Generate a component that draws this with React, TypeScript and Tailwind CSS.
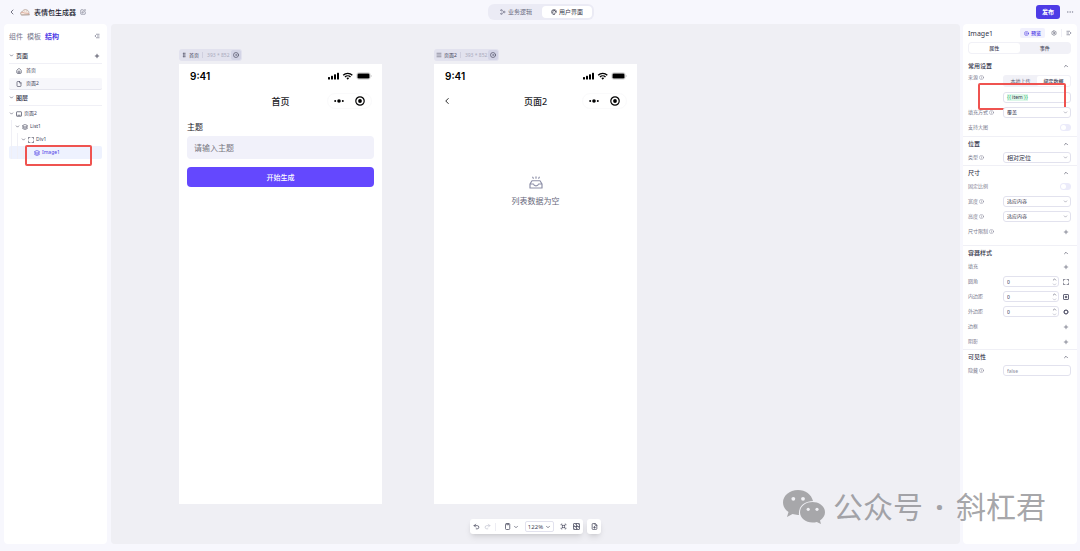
import { useState } from "react";
import type { ReactNode } from "react";
import {
  ChevronDown,
  ChevronLeft,
  ChevronUp,
  CircleDot,
  CirclePlay,
  Ellipsis,
  File,
  FilePlus,
  GripVertical,
  Home,
  Info,
  Layers,
  Menu,
  Palette,
  Plus,
  Redo2,
  Settings,
  Share2,
  SquarePen,
  Undo2,
} from "lucide-react";

function MascotLogo() {
  return (
    <svg viewBox="0 0 20 16" className="h-2 w-2.5" fill="none" stroke="#a08d84" strokeWidth="1.1">
      <path d="M1 12c0-3 1-5 4-5 1-4 6-5 9-3 3 1 4 4 4 7l1 3H3z" fill="#f6ebe3" />
      <path d="M2 10c3-2 5-1 7 0l9 1" stroke="#d08775" />
      <path d="M9 6h1M13 6h1M2 14l16-1" />
    </svg>
  );
}

function CollapseIcon({ flip = false }: { flip?: boolean }) {
  return (
    <svg viewBox="0 0 12 12" className={flip ? "size-1.5 rotate-180" : "size-1.5"} fill="none" stroke="#77788c" strokeWidth="1.4">
      <path d="M4 2.500h7M6 6h5M4 9.500h7" />
      <path d="M4 4v4L1 6z" fill="#77788c" stroke="none" />
    </svg>
  );
}

function CornersIcon({ className }: { className: string }) {
  return (
    <svg viewBox="0 0 12 12" className={className} fill="none" stroke="currentColor" strokeWidth="1.500">
      <path d="M1 3.500V1h2.500M8.500 1H11v2.500M11 8.500V11H8.500M3.500 11H1V8.500" />
      <path d="M5.300 1h1.400M5.300 11h1.400M1 5.300v1.400M11 5.300v1.400" strokeWidth="1.200" />
    </svg>
  );
}

function ScreenIcon() {
  return (
    <svg viewBox="0 0 12 12" className="size-1.5" fill="none" stroke="currentColor" strokeWidth="1.400">
      <rect x="1" y="1.500" width="10" height="9" rx="1" />
      <path d="M3 8.500h6" />
    </svg>
  );
}

function FitIcon() {
  return (
    <svg viewBox="0 0 14 14" className="size-[7px]" fill="none" stroke="currentColor" strokeWidth="1.300">
      <path d="M1 3.500h2.500V1M10.500 1v2.500H13M13 10.500h-2.500V13M3.500 13v-2.500H1" />
      <rect x="4.500" y="4.500" width="5" height="5" />
    </svg>
  );
}

function OverviewIcon() {
  return (
    <svg viewBox="0 0 14 14" className="size-[7px]" fill="none" stroke="currentColor" strokeWidth="1.500">
      <rect x="1" y="1" width="12" height="12" rx="1" />
      <path d="M1 7h12M7 1v12M3 5l2-2M9 5l2-2M3 11l2-2M9 11l2-2" />
    </svg>
  );
}

function DeviceIcon() {
  return (
    <svg viewBox="0 0 14 14" className="size-[7px]" fill="none" stroke="currentColor" strokeWidth="1.500">
      <rect x="3" y="1" width="8.500" height="12" rx="2" />
      <path d="M5.500 1v2.500h3.500V1" />
    </svg>
  );
}

function PaddingIcon() {
  return (
    <svg viewBox="0 0 12 12" className="size-1.5" fill="none" stroke="#55566b" strokeWidth="1.800">
      <rect x="1" y="1" width="10" height="10" rx="1" />
      <rect x="4.500" y="4.500" width="3" height="3" strokeWidth="1.500" />
    </svg>
  );
}

function MarginIcon() {
  return (
    <svg viewBox="0 0 12 12" className="size-1.5" fill="none" stroke="#55566b" strokeWidth="1.800">
      <path d="M6 1 11 6 6 11 1 6z" />
      <rect x="3" y="3" width="6" height="6" strokeWidth="1.500" />
    </svg>
  );
}

function TopBar() {
  return (
    <header className="grid h-6 grid-cols-[1fr_auto_1fr] items-center pr-1.5 pl-2">
      <div className="flex items-center">
        <button aria-label="返回" className="mr-1">
          <ChevronLeft className="size-2 text-[#333447]" />
        </button>
        <MascotLogo />
        <h1 className="ml-1 text-[7px] font-medium text-[#20212e]">表情包生成器</h1>
        <button aria-label="重命名" className="ml-1">
          <SquarePen className="size-1.5 text-[#55566b]" />
        </button>
      </div>
      <nav className="flex h-4 items-center gap-2.5 rounded-md bg-[#ebebf5] pr-0.5 pl-3 text-[6px]">
        <button className="flex items-center gap-0.5 text-[#6a6b80]">
          <Share2 className="size-1.5 rotate-180" />
          业务逻辑
        </button>
        <button className="flex h-3 items-center gap-0.5 rounded-[4px] bg-white px-[9px] text-[#3a3b4d]">
          <Palette className="size-1.5" strokeWidth={2.5} />
          用户界面
        </button>
      </nav>
      <div className="flex items-center justify-end gap-1.5">
        <button className="h-3.5 rounded-[3px] bg-[#4d3be6] px-1.5 text-[6px] font-bold text-white">发布</button>
        <button aria-label="更多">
          <Ellipsis className="size-2 text-[#77788c]" strokeWidth={1.5} />
        </button>
      </div>
    </header>
  );
}

function Chevron() {
  return <ChevronDown className="size-[5px] shrink-0 text-[#55566b]" strokeWidth={3} />;
}

function TreeRow({ depth, icon, label, open = true, active = false }: {
  depth: number;
  icon: ReactNode;
  label: string;
  open?: boolean;
  active?: boolean;
}) {
  return (
    <li className={`relative flex h-[13px] items-center rounded-[2px] text-[5px] ${active ? "bg-[#eef2fe] text-[#4d3be6]" : "text-[#44455a]"}`}>
      {Array.from({ length: depth }, (_, i) => (
        <span key={i} className="h-full w-1.5 shrink-0">
          <span className="ml-0.5 block h-full border-l border-[#f0f0f6]" />
        </span>
      ))}
      <span className="flex w-[7px] shrink-0">{open && <Chevron />}</span>
      <button className="flex items-center gap-0.5 whitespace-nowrap">
        {icon}
        {label}
      </button>
      {active && <span className="absolute -top-px left-4 h-[21px] w-[67px] rounded-[2px] border-2 border-[#ef5350]" />}
    </li>
  );
}

function LeftPanel() {
  return (
    <aside className="w-[103px] shrink-0 rounded-sm bg-white px-[5px]">
      <div className="flex h-6 items-center gap-1 text-[7px] text-[#77788c]">
        <button>组件</button>
        <button>模板</button>
        <button className="font-bold text-[#4d3be6]">结构</button>
        <span className="ml-auto pr-0.5">
          <CollapseIcon />
        </span>
      </div>
      <div className="flex h-4 items-center gap-0.5 border-b border-[#f0f0f6] text-[6px] font-medium text-[#33344a]">
        <Chevron />
        页面
        <button aria-label="添加页面" className="ml-auto pr-0.5">
          <Plus className="size-1.5 text-[#33344a]" strokeWidth={3} />
        </button>
      </div>
      <ul className="text-[5px] text-[#44455a]">
        <li className="mb-px flex h-[13px] items-center gap-1 pl-[7px]">
          <Home className="size-1.5" strokeWidth={2.5} />
          首页
        </li>
        <li className="flex h-3 items-center gap-1 rounded-[2px] border-b border-[#e6e6ee] bg-[#f7f7fb] pl-[7px]">
          <File className="size-1.5" strokeWidth={2.5} />
          页面2
        </li>
      </ul>
      <div className="flex h-4 items-center gap-0.5 border-b border-[#f0f0f6] text-[6px] font-medium text-[#33344a]">
        <Chevron />
        图层
      </div>
      <ul className="pt-px">
        <TreeRow depth={0} icon={<ScreenIcon />} label="页面2" />
        <TreeRow depth={1} icon={<Layers className="size-1.5" strokeWidth={2.5} />} label="List1" />
        <TreeRow depth={2} icon={<CornersIcon className="size-1.5" />} label="Div1" />
        <TreeRow depth={3} icon={<Layers className="size-1.5" strokeWidth={2.5} />} label="Image1" open={false} active />
      </ul>
    </aside>
  );
}

function StatusBar() {
  return (
    <div className="flex h-6 items-center justify-between pr-2.5 pl-[11px]">
      <span className="font-['Inter',sans-serif] text-[10px] font-semibold text-black">9:41</span>
      <svg viewBox="0 0 44 8" className="h-2 w-11" fill="#000">
        <rect x="0" y="5" width="2" height="2.500" rx=".5" />
        <rect x="3" y="3.800" width="2" height="3.700" rx=".5" />
        <rect x="6" y="2.300" width="2" height="5.200" rx=".5" />
        <rect x="9" y=".7" width="2" height="6.800" rx=".5" />
        <path d="M15.200 3.200c2.500-2.500 6.600-2.500 9.100 0M17 5c1.500-1.500 4-1.500 5.500 0" fill="none" stroke="#000" strokeWidth="1.400" />
        <path d="m19.750 7.700-1.400-1.600c.8-.7 2-.7 2.800 0z" />
        <rect x="28.800" y=".7" width="13.400" height="6.600" rx="2" fill="none" stroke="#b5b5b5" strokeWidth=".5" />
        <rect x="29.500" y="1.400" width="12" height="5.200" rx="1.300" />
        <path d="M42.900 3v2c.8-.2.8-1.800 0-2z" fill="#aaa" />
      </svg>
    </div>
  );
}

function NavBar({ title, back = false }: { title: string; back?: boolean }) {
  return (
    <div className="grid h-[26px] grid-cols-[1fr_auto_1fr] items-center px-2">
      <span>{back && <ChevronLeft className="size-2.5 text-black" strokeWidth={2} />}</span>
      <h2 className="text-[9px] font-medium text-[#1b1b1f]">{title}</h2>
      <span className="mr-0.5 flex h-4 w-[45px] items-center justify-around justify-self-end rounded-full border border-[#fafafb]">
        <svg viewBox="0 0 10 4" className="h-1 w-2.5">
          <circle cx="1.200" cy="2" r="1" />
          <circle cx="5" cy="2" r="1.800" />
          <circle cx="8.800" cy="2" r="1" />
        </svg>
        <svg viewBox="0 0 10 10" className="size-2.5">
          <circle cx="5" cy="5" r="4.200" fill="none" stroke="#000" strokeWidth="1.200" />
          <circle cx="5" cy="5" r="1.900" />
        </svg>
      </span>
    </div>
  );
}

function Artboard({ name, icon, children }: { name: string; icon: ReactNode; children: ReactNode }) {
  return (
    <section className="flex w-[203px] flex-col gap-[3px]">
      <div className="flex h-3 items-center gap-[3px] self-start rounded-[3px] bg-[#e2e2ee] pr-px pl-0.5 text-[5px] text-[#44455a]">
        <span className="flex items-center gap-0.5">
          {icon}
          {name}
        </span>
        <span className="flex items-center gap-1 text-[#aaabbd]">
          <span className="h-1.5 border-l border-[#cfcfdf]" />
          393 * 852
        </span>
        <button aria-label="预览页面" className="-ml-0.5 flex size-2.5 items-center justify-center rounded-[2px] bg-[#d3d4e6]">
          <CircleDot className="size-1.5 text-[#44455a]" strokeWidth={2.5} />
        </button>
      </div>
      <div className="h-110 bg-white">{children}</div>
    </section>
  );
}

function EmptyBox() {
  return (
    <svg viewBox="0 0 28 26" className="h-[13px] w-3.5" fill="none" stroke="#8e90a8" strokeWidth="2.400" strokeLinejoin="round" strokeLinecap="round">
      <path d="M2 16 6 9.500h16L26 16v8H2zM2 16h7c1 5 9 5 10 0h7" />
      <path d="M14 1.500v3M7.500 2.500l1 2M20.500 2.500l-1 2" />
    </svg>
  );
}

function Toolbar() {
  return (
    <div className="mt-[15px] flex gap-1 self-center text-[#44455a]">
      <div className="flex h-[15px] items-center rounded-[3px] bg-white px-[3px] shadow-md">
        <button aria-label="撤销"><Undo2 className="size-[7px]" strokeWidth={2.5} /></button>
        <button aria-label="重做" className="ml-1"><Redo2 className="size-[7px] text-[#c4c5d2]" strokeWidth={2.5} /></button>
        <span className="ml-1 h-2 border-l border-[#ededf3]" />
        <button aria-label="设备" className="ml-2 flex items-center gap-0.5">
          <DeviceIcon />
          <ChevronDown className="size-1.5" strokeWidth={2.5} />
        </button>
        <button className="mx-1.5 flex h-[11px] items-center gap-0.5 rounded-[2px] border border-[#e2e2ee] px-0.5 text-[6px]">
          122%
          <ChevronDown className="size-1.5" strokeWidth={2.5} />
        </button>
        <button aria-label="适应画布"><FitIcon /></button>
        <button aria-label="组件概览" className="ml-1.5"><OverviewIcon /></button>
      </div>
      <button aria-label="新建页面" className="flex h-[15px] w-3.5 items-center justify-center rounded-[3px] bg-white shadow-md">
        <FilePlus className="size-[7px]" strokeWidth={2.5} />
      </button>
    </div>
  );
}

function Canvas() {
  return (
    <main className="flex min-w-0 flex-1 flex-col rounded-sm bg-[#efeff4] pt-[25px] pb-2.5">
      <div className="flex gap-[52px] pl-17">
        <Artboard name="首页" icon={<GripVertical className="size-1.5" strokeWidth={2} />}>
          <StatusBar />
          <NavBar title="首页" />
          <form className="flex flex-col px-2 pt-[7px]" onSubmit={(e) => e.preventDefault()}>
            <label htmlFor="topic" className="flex h-3 items-center text-[8px] text-[#1b1b1f]">主题</label>
            <input
              id="topic"
              placeholder="请输入主题"
              className="mt-[3px] h-[23px] w-full rounded-[4px] bg-[#f1f1fa] px-[7px] text-[8px] placeholder:text-[#77777f]"
            />
            <button className="mt-2 h-5 rounded-[4px] bg-[#6448fe] text-[7px] font-medium text-white">开始生成</button>
          </form>
        </Artboard>
        <Artboard name="页面2" icon={<Menu className="size-1.5" />}>
          <StatusBar />
          <NavBar title="页面2" back />
          <div className="flex flex-col items-center gap-2 pt-[62px]">
            <EmptyBox />
            <p className="text-[8px] text-[#66677a]">列表数据为空</p>
          </div>
        </Artboard>
      </div>
      <Toolbar />
    </main>
  );
}

function Section({ title, first = false, children }: { title: string; first?: boolean; children: ReactNode }) {
  return (
    <section className={`pr-1.5 pl-[5px] ${first ? "pb-px" : "border-t border-[#f0f0f6] pt-px"}`}>
      <h3 className="flex h-3 items-center justify-between text-[6px] font-medium text-[#33344a]">
        {title}
        <ChevronUp className="mr-0.5 size-1.5 text-[#44455a]" strokeWidth={2.5} />
      </h3>
      {children}
    </section>
  );
}

function FieldLabel({ text, info, htmlFor }: { text: string; info?: boolean; htmlFor?: string }) {
  return (
    <label htmlFor={htmlFor} className="flex w-[35px] shrink-0 items-center gap-px whitespace-nowrap text-[5px] text-[#77788c]">
      {text}
      {info && <Info className="size-[5px]" />}
    </label>
  );
}

const boxClass = "h-[11px] w-full rounded-[3px] border border-[#e2e2ee] bg-white";

function SelectRow({ id, label, value, info = true, large = false }: {
  id: string;
  label: string;
  value: string;
  info?: boolean;
  large?: boolean;
}) {
  return (
    <div className="flex h-[15px] items-center">
      <FieldLabel htmlFor={id} text={label} info={info} />
      <span className="relative flex flex-1 items-center">
        <select id={id} className={`${boxClass} appearance-none pl-[3px] text-[#33344a] ${large ? "text-[6px]" : "text-[5px]"}`}>
          <option>{value}</option>
        </select>
        <ChevronDown className="pointer-events-none absolute right-[3px] size-[5px] text-[#77788c]" strokeWidth={2.5} />
      </span>
    </div>
  );
}

function SwitchRow({ id, label }: { id: string; label: string }) {
  return (
    <div className="flex h-[15px] items-center justify-between">
      <FieldLabel htmlFor={id} text={label} />
      <input
        id={id}
        type="checkbox"
        role="switch"
        className="h-[7px] w-[11px] appearance-none rounded-full bg-[#ebebfa] before:m-px before:block before:size-[5px] before:rounded-full before:bg-white checked:bg-[#6448fe] checked:before:ml-[5px]"
      />
    </div>
  );
}

function AddRow({ label, info }: { label: string; info?: boolean }) {
  return (
    <div className="flex h-[15px] items-center justify-between">
      <FieldLabel text={label} info={info} />
      <button aria-label={`添加${label}`} className="mr-0.5">
        <Plus className="size-1.5 text-[#55566b]" strokeWidth={2.5} />
      </button>
    </div>
  );
}

function NumberRow({ id, label, icon }: { id: string; label: string; icon: ReactNode }) {
  const [value, setValue] = useState("0");
  return (
    <div className="flex h-[15px] items-center">
      <FieldLabel htmlFor={id} text={label} />
      <span className="relative flex flex-1 items-center">
        <input
          id={id}
          inputMode="numeric"
          value={value}
          onChange={(e) => setValue(e.target.value)}
          className={`${boxClass} pl-[3px] text-[5px] text-[#33344a]`}
        />
        <span className="absolute right-0.5 flex flex-col text-[#55566b]">
          <ChevronUp className="size-[5px]" strokeWidth={3} />
          <ChevronDown className="size-[5px] text-[#aaabbd]" strokeWidth={3} />
        </span>
      </span>
      <button aria-label={`${label}分别设置`} className="mr-0.5 ml-1">
        {icon}
      </button>
    </div>
  );
}

function RightPanel() {
  return (
    <aside className="w-[114px] shrink-0 rounded-sm bg-white">
      <div className="flex h-[18px] items-center px-[5px]">
        <h2 className="text-[7px] text-[#33344a]">Image1</h2>
        <button className="ml-auto flex h-2.5 items-center gap-0.5 rounded-[2px] bg-[#f1f1fd] px-1 text-[5px] font-medium text-[#4d3be6]">
          <CirclePlay className="size-[5px]" strokeWidth={2.5} />
          预览
        </button>
        <button aria-label="设置" className="ml-1.5"><Settings className="size-1.5 text-[#55566b]" strokeWidth={2} /></button>
        <span className="mx-1 h-2 border-l border-[#f0f0f6]" />
        <CollapseIcon flip />
      </div>
      <div className="pr-1.5 pb-1.5 pl-[5px]">
        <div className="grid h-3 grid-cols-2 rounded-[4px] bg-[#f1f1f7] p-px text-[5px] text-[#44455a]">
          <button className="rounded-[3px] bg-white font-medium">属性</button>
          <button className="font-medium">事件</button>
        </div>
      </div>
      <Section title="常用设置" first>
        <div className="flex h-[18px] items-start pt-[3px]">
          <FieldLabel text="来源" info />
          <div className="grid h-3 flex-1 grid-cols-2 rounded-[3px] bg-[#f1f1f7] p-px text-[5px]">
            <button className="text-[#66677a]">本地上传</button>
            <button className="rounded-[2px] bg-white font-medium text-[#44455a]">绑定数据</button>
          </div>
        </div>
        <div className="relative flex h-[15px] items-center pl-[35px]">
          <div className={`${boxClass} flex items-center pl-[3px] text-[5px] text-[#33344a]`}>
            <code className="bg-[#dcf7e8] py-px font-[inherit] text-[#3fbf7f]">
              {"{{ "}
              <span className="text-[#33344a]">item</span>
              {" }}"}
            </code>
          </div>
          <span className="absolute -top-[7px] right-[5px] left-2.5 h-[27px] rounded-[2px] border-2 border-[#ef5350]" />
        </div>
        <SelectRow id="fill" label="填充方式" value="覆盖" />
        <SwitchRow id="zoomable" label="支持大图" />
      </Section>
      <Section title="位置">
        <SelectRow id="position" label="类型" value="相对定位" large />
      </Section>
      <Section title="尺寸">
        <SwitchRow id="ratio" label="固定比例" />
        <SelectRow id="width" label="宽度" value="适应内容" />
        <SelectRow id="height" label="高度" value="适应内容" />
        <div className="pb-1.5">
          <AddRow label="尺寸限制" info />
        </div>
      </Section>
      <Section title="容器样式">
        <AddRow label="填充" />
        <NumberRow id="radius" label="圆角" icon={<CornersIcon className="size-1.5 text-[#44455a]" />} />
        <NumberRow id="padding" label="内边距" icon={<PaddingIcon />} />
        <NumberRow id="margin" label="外边距" icon={<MarginIcon />} />
        <AddRow label="边框" />
        <AddRow label="阴影" />
      </Section>
      <Section title="可见性">
        <div className="flex h-[15px] items-center">
          <FieldLabel htmlFor="hidden" text="隐藏" info />
          <span className="flex flex-1">
            <input id="hidden" placeholder="false" className={`${boxClass} pl-[3px] text-[5px] placeholder:text-[#8b8c9e]`} />
          </span>
        </div>
      </Section>
    </aside>
  );
}

function Watermark() {
  return (
    <div className="pointer-events-none absolute right-[34px] bottom-[26px] flex items-center gap-2 text-[30px] leading-9 whitespace-nowrap text-[#808084]/70">
      <svg viewBox="0 0 42 34" className="h-[34px] w-[42px]" fill="#a7a7aa">
        <path d="M15 0C6.500 0 0 5.600 0 12.500c0 4 2.100 7.300 5.500 9.600L4 27l5.500-2.900c1.900.6 4 .9 6.500.8C15 17 21 11 30 11 28.500 4.500 22.500 0 15 0z" />
        <path d="M29.500 12C22.500 12 17 16.500 17 22.300c0 5.700 5.500 10.200 12.500 10.200 1.600 0 3-.2 4.300-.6L38 34l-1-3.500c3-2 5-4.900 5-8.200C42 16.500 36.500 12 29.500 12z" />
        <g fill="#f1f1f5">
          <circle cx="10.300" cy="8.800" r="1.900" />
          <circle cx="20" cy="8.800" r="1.900" />
          <circle cx="25.200" cy="19.300" r="1.600" />
          <circle cx="34" cy="19.300" r="1.600" />
        </g>
      </svg>
      <span>公众号</span>
      <span className="flex w-[17px] justify-center font-bold">·</span>
      <span>斜杠君</span>
    </div>
  );
}

export default function App() {
  return (
    <div className="relative flex min-h-screen flex-col bg-[#f7f7fd] font-['Noto_Sans','Noto_Sans_CJK_SC',sans-serif] leading-none">
      <TopBar />
      <div className="flex flex-1 pr-[3px] pb-[7px] pl-1">
        <LeftPanel />
        <div className="flex min-w-0 flex-1 pr-[3px] pl-1">
          <Canvas />
        </div>
        <RightPanel />
      </div>
      <Watermark />
    </div>
  );
}
